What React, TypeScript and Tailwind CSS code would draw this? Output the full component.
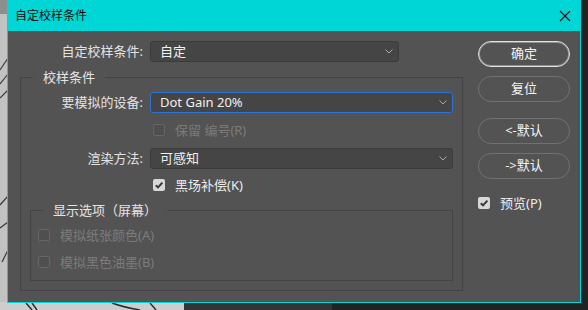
import React from "react";

function Chevron() {
  return (
    <svg width="8" height="5" viewBox="0 0 8 5">
      <path d="M0.5 0.5 L4 4 L7.5 0.5" fill="none" stroke="#a9a9a9" strokeWidth="1" />
    </svg>
  );
}

function Select({ value, w, focus }: { value: string; w: string; focus?: boolean }) {
  return (
    <div
      className={`${w} h-[21px] rounded-[3px] border bg-[#454545] flex items-center justify-between pl-[9px] pr-[5px] text-[#f0f0f0] ${
        focus ? "border-[#2a72d4]" : "border-[#3b3b3b]"
      }`}
    >
      <span className="leading-none">{value}</span>
      <Chevron />
    </div>
  );
}

function CheckBox({ checked, disabled }: { checked?: boolean; disabled?: boolean }) {
  if (checked) {
    return (
      <div className="w-[12px] h-[12px] shrink-0 rounded-[2px] bg-[#d8d8d8] flex items-center justify-center">
        <svg width="10" height="10" viewBox="0 0 10 10">
          <path d="M1.8 5.2 L4 7.4 L8.4 2.6" fill="none" stroke="#383838" strokeWidth="2" />
        </svg>
      </div>
    );
  }
  return (
    <div
      className={`w-[12px] h-[12px] shrink-0 rounded-[2px] border ${
        disabled ? "border-[#666] bg-[#4f4f4f]" : "border-[#999] bg-[#4a4a4a]"
      }`}
    />
  );
}

function Pill({ label, primary }: { label: string; primary?: boolean }) {
  return (
    <div
      className={`w-[92px] h-[26px] rounded-full border flex items-center justify-center text-[#f4f4f4] ${
        primary ? "border-[#e2e2e2] shadow-[inset_0_0_0_1px_rgba(255,255,255,0.35)]" : "border-[#717171]"
      }`}
    >
      {label}
    </div>
  );
}

function Backdrop() {
  return (
    <svg className="absolute inset-0" width="588" height="310" viewBox="0 0 588 310">
      <rect x="0" y="0" width="8" height="310" fill="#c2c2c2" />
      <rect x="0" y="0" width="8" height="14" fill="#8e8e8e" />
      <path d="M0 70 L8 58 M0 84 L8 74 M0 98 L8 90 M0 205 L8 196 M0 228 L8 222 M2 262 L8 250" stroke="#3a3a3a" strokeWidth="1.2" />
      <rect x="0" y="302" width="184" height="8" fill="#cdcdcd" />
      <rect x="184" y="302" width="148" height="8" fill="#343434" />
      <path d="M26 303 L32 310 M32 303 L37 310 M112 303 C120 306 128 308 140 310 M150 303 L156 310" stroke="#2a2a2a" strokeWidth="1.4" fill="none" />
    </svg>
  );
}

export default function App() {
  return (
    <div className="relative w-[588px] h-[310px] bg-[#222222] overflow-hidden font-['Noto_Sans','Noto_Sans_CJK_SC',sans-serif] text-[13px]">
      <Backdrop />
      <div className="relative ml-[7px] w-[574px] h-[303px] border border-[#00d6d6] bg-[#535353] flex flex-col">
        <div className="h-[30px] shrink-0 bg-[#00d6d6] flex items-center justify-between pl-[7px] pr-[9px]">
          <span className="text-[12px] text-[#0c0c0c]">自定校样条件</span>
          <svg width="12" height="12" viewBox="0 0 12 12">
            <path d="M1 1 L11 11 M11 1 L1 11" stroke="#111" strokeWidth="1.2" />
          </svg>
        </div>

        <div className="flex pt-[10px]">
          <div className="w-[455px] flex flex-col">
            <div className="flex items-center h-[21px]">
              <div className="w-[135px] text-right text-[#e2e2e2]">自定校样条件:</div>
              <div className="ml-[7px]">
                <Select value="自定" w="w-[249px]" />
              </div>
            </div>

            <fieldset className="ml-[12px] mt-[6px] w-[443px] h-[223px] border border-[#444444] pl-[9px] pr-[9px]">
              <legend className="ml-[3px] px-[10px] leading-[18px] text-[#e4e4e4]">校样条件</legend>

              <div className="flex items-center h-[21px] mt-[6px]">
                <div className="w-[113px] text-right text-[#e2e2e2]">要模拟的设备:</div>
                <div className="ml-[7px]">
                  <Select value="Dot Gain 20%" w="w-[303px]" focus />
                </div>
              </div>

              <div className="flex items-center h-[12px] mt-[11px] pl-[123px] gap-[10px] text-[#7b7b7b]">
                <CheckBox disabled />
                <span className="leading-none">保留 编号(R)</span>
              </div>

              <div className="flex items-center h-[21px] mt-[12px]">
                <div className="w-[113px] text-right text-[#e2e2e2]">渲染方法:</div>
                <div className="ml-[7px]">
                  <Select value="可感知" w="w-[303px]" />
                </div>
              </div>

              <div className="flex items-center h-[12px] mt-[10px] pl-[123px] gap-[10px] text-[#ececec]">
                <CheckBox checked />
                <span className="leading-none">黑场补偿(K)</span>
              </div>

              <fieldset className="mt-[10px] w-[423px] h-[80px] border border-[#444444] pl-[7px]">
                <legend className="ml-[5px] px-[10px] leading-[18px] text-[#e4e4e4]">显示选项（屏幕）</legend>
                <div className="flex items-center h-[12px] mt-[10px] gap-[10px] text-[#7b7b7b]">
                  <CheckBox disabled />
                  <span className="leading-none">模拟纸张颜色(A)</span>
                </div>
                <div className="flex items-center h-[12px] mt-[15px] gap-[10px] text-[#7b7b7b]">
                  <CheckBox disabled />
                  <span className="leading-none">模拟黑色油墨(B)</span>
                </div>
              </fieldset>
            </fieldset>
          </div>

          <div className="ml-[15px] flex flex-col">
            <Pill label="确定" primary />
            <div className="mt-[9px]">
              <Pill label="复位" />
            </div>
            <div className="mt-[16px]">
              <Pill label="<-默认" />
            </div>
            <div className="mt-[9px]">
              <Pill label="->默认" />
            </div>
            <div className="mt-[18px] flex items-center h-[12px] gap-[10px] text-[#ececec]">
              <CheckBox checked />
              <span className="leading-none">预览(P)</span>
            </div>
          </div>
        </div>
      </div>
    </div>
  );
}
